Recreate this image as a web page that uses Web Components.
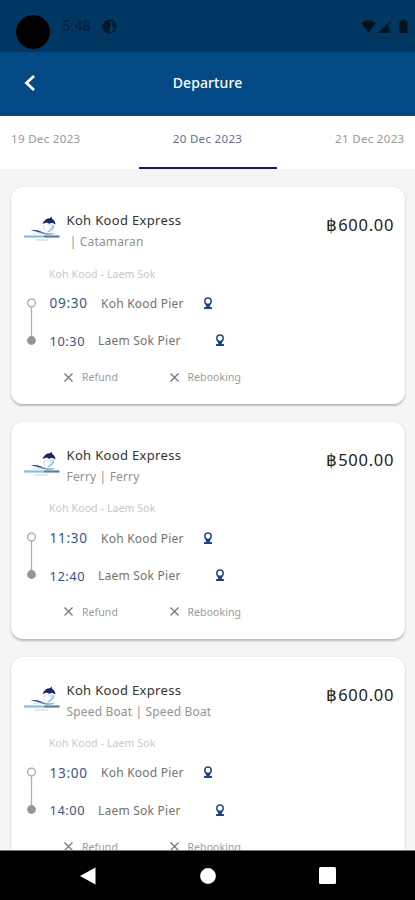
<!DOCTYPE html>
<html lang="en">
<head>
<meta charset="utf-8">
<title>Departure</title>
<style>
html,body{margin:0;height:900px;overflow:hidden;background:#f5f5f6}
body{font-family:"Noto Sans","Open Sans",sans-serif}
</style>
</head>
<body>
<departure-app></departure-app>
<script>
const define = (name, html) => customElements.define(name, class extends HTMLElement {
  constructor() {
    super();
    const t = document.createElement('template');
    t.innerHTML = html;
    this.attachShadow({mode: 'open'}).appendChild(t.content.cloneNode(true));
  }
});

define('status-bar', `<style>
:host{display:flex;height:52px;box-sizing:border-box;background:#003763;color:#04233f;padding:15px 7px 0 16px;align-items:flex-start}
.cam{width:34px;height:34px;border-radius:50%;background:#000;flex:none}
.time{font:500 14.5px/24px Roboto,sans-serif;margin-left:12px;width:40px;letter-spacing:.1px;white-space:nowrap}
svg{display:block;flex:none}
</style>
<span class="cam"></span><span class="time">5:48</span>
<svg width="15" height="15" viewBox="0 0 15 15" style="margin-top:4px"><circle cx="7.500" cy="7.500" r="6.300" fill="none" stroke="#04182a" stroke-width="1.600"/><path d="M2 3L6 1.300h3L7.500 4.500H9.500L8 7.500 7 13.500C3 13 .5 9 2 3zM10.500 3.500h2.500l.8 4-2 1.500-1.800-2z" fill="#04182a"/></svg>
<span style="flex:1"></span>
<svg width="47" height="15" viewBox="0 0 47 15" style="margin-top:4px" fill="#02131f"><path d="M0 4Q7.500-1.600 15 4L7.500 13.500z"/><path d="M17 14L27 4v10z"/><path d="M27 4l3-3v3.500h-1.500v6H30V14h-3z" opacity=".55"/><path d="M39.500 1.800h1.500V.800h3v1h1.500q1 0 1 1V13q0 1-1 1h-6q-1 0-1-1V2.800q0-1 1-1z"/></svg>`);

define('app-bar', `<style>
:host{display:grid;grid-template-columns:60px 1fr 60px;height:64px;background:#034985;color:#fff;align-items:center;box-sizing:border-box;padding-bottom:2px}
svg{display:block;margin-left:22.500px}
.t{text-align:center;font-size:14px;font-weight:500;line-height:20px;letter-spacing:.1px}
</style>
<svg width="14" height="18" viewBox="0 0 14 18"><path d="M11 2L3.500 9l7.500 7" fill="none" stroke="#fff" stroke-width="2.800"/></svg>
<div class="t"><slot></slot></div>`);

define('date-tabs', `<style>
:host{display:grid;grid-template-columns:1fr 138px 1fr;height:53px;background:#fff;color:#999;font-size:11.500px;line-height:16px;box-sizing:border-box;letter-spacing:.33px}
div{padding-top:15px;box-sizing:border-box;white-space:nowrap}
.l{padding-left:11px}.m{text-align:center;color:#626e9e;border-bottom:2px solid #200f82}.r{text-align:right;padding-right:10.500px}
</style><div class="l"><slot name="prev"></slot></div><div class="m"><slot name="current"></slot></div><div class="r"><slot name="next"></slot></div>`);

define('carrier-logo', `<style>:host{display:block;width:36px;height:28px}svg{display:block}</style>
<svg width="36" height="28" viewBox="0 0 36 28">
<path d="M18.500 8C20 4 23 2 26 2.200l1.600-1.700.4 2.200c2.500 1.500 3.600 3.700 3.400 5.800l-3.200-1.700-3.200.9-2.300-1.300z" fill="#182567"/>
<path d="M22 7.500q2.500 1.500 6 0l2.500 1.500q-.5 3-3 5l-3.500 2.500q3-4 1-6.500-1.500-1-3-2.500z" fill="#dceff6"/>
<path d="M29.500 9.500q-.5 4.500-6 6.500" fill="none" stroke="#76b3d2" stroke-width="1.300"/>
<path d="M20.500 9q-2 3 .5 5.500" fill="none" stroke="#b9dcec"/>
<path d="M6.500 14.500q5-1.500 10 .8 6 3 15 1.900-7 2.500-14 .3-5-2.300-11-3z" fill="#234c83"/>
<path d="M9 18q8-2.500 20 .5" fill="none" stroke="#b5ddea" stroke-width=".8"/>
<path d="M0 20.500h20" stroke="#7cc3de" stroke-width="2.200"/><path d="M20 20.500h15.500" stroke="#587aa4" stroke-width="2.200"/>
<path d="M11 24h13" stroke="#c2ced4"/></svg>`);

define('pier-pin', `<style>:host{display:block;width:10px;height:13px}svg{display:block}</style>
<svg width="10" height="13" viewBox="0 0 10 13"><circle cx="5" cy="4.300" r="3.200" fill="none" stroke="#27498f" stroke-width="1.500"/><path d="M2.300 7h5.400L6.600 10h2.300v2H1.100v-2h2.300z" fill="#1d3f88"/></svg>`);

define('rule-item', `<style>
:host{display:flex;align-items:center;font-size:10.500px;line-height:14px;color:#9c9c9c;letter-spacing:.08px}
svg{margin-right:9px;flex:none}
</style><svg width="9" height="9" viewBox="0 0 9 9"><path d="M.500.500l8 8M8.500.500l-8 8" stroke="#777" stroke-width="1.300"/></svg><slot></slot>`);

define('trip-card', `<style>
:host{display:block;box-sizing:border-box;height:217px;background:#fff;border-radius:12px;padding:23px 11px 0 12.500px;box-shadow:0 1.500px 2px #bbb,0 0 2px #e8e8e8}
.head{display:grid;grid-template-columns:43px 1fr auto;height:52.500px}
carrier-logo{margin-top:6px}
.name{font-size:13px;line-height:21px;color:#333;letter-spacing:.33px}
.kind{font-size:12px;line-height:22px;color:#929292;white-space:pre;letter-spacing:.16px}
.price{font-size:16.500px;line-height:30px;color:#222;letter-spacing:.75px;margin-right:-.75px}
.route{font-size:10.500px;line-height:22px;color:#c8c8c8;margin-left:25.500px;letter-spacing:.12px}
.legs{display:grid;grid-template-columns:26px 1fr}
.rail{margin:12px 0 0 2px}
.leg{display:flex;align-items:center;height:37.500px;font-size:12px;color:#727272;white-space:nowrap;letter-spacing:.23px}
.time{font-size:13.500px;color:#34568f;letter-spacing:.72px}
.rules{display:flex;margin:10.500px 0 0 40.500px;height:14px}
rule-item{width:105.500px}
svg{display:block}
</style>
<div class="head"><carrier-logo></carrier-logo><div><div class="name"><slot name="name"></slot></div><div class="kind"><slot name="kind"></slot></div></div><div class="price"><slot name="price"></slot></div></div>
<div class="route">Koh Kood - Laem Sok</div>
<div class="legs"><svg class="rail" width="12" height="50" viewBox="0 0 12 50"><path d="M5.500 10v30" stroke="#b0b0b0" stroke-width="1.300"/><circle cx="5.500" cy="6" r="3.900" fill="#fff" stroke="#a5a5a5" stroke-width="1.200"/><circle cx="5.500" cy="43.500" r="4.400" fill="#959595"/></svg>
<div><div class="leg"><span class="time" style="width:51.500px"><slot name="dep"></slot></span><span style="width:101.500px">Koh Kood Pier</span><pier-pin></pier-pin></div>
<div class="leg"><span class="time" style="width:48.500px;font-size:12.800px;letter-spacing:.6px"><slot name="arr"></slot></span><span style="width:117px">Laem Sok Pier</span><pier-pin></pier-pin></div></div></div>
<div class="rules"><rule-item>Refund</rule-item><rule-item>Rebooking</rule-item></div>`);

define('nav-bar', `<style>
:host{display:grid;grid-template-columns:repeat(3,120px);justify-content:center;justify-items:center;align-items:center;height:50px;background:#000;border-top:1px solid #777;box-sizing:border-box}
svg{display:block}
</style>
<svg width="16" height="18" viewBox="0 0 16 18"><path d="M0 9L15.500.500v17z" fill="#fff"/></svg>
<svg width="16" height="16" viewBox="0 0 16 16"><circle cx="8" cy="8" r="7.900" fill="#fff"/></svg>
<svg width="17" height="17" viewBox="0 0 17 17"><rect width="17" height="17" rx="1.500" fill="#fff"/></svg>`);

define('departure-app', `<style>
:host{display:grid;grid-template-rows:52px 64px 53px 681px 50px;height:900px;width:415px;overflow:hidden}
main{overflow:hidden;padding:18px 10.500px 0 11px;display:flex;flex-direction:column;gap:17.800px;background:#f5f5f6}
trip-card{flex:none}
</style>
<status-bar></status-bar><app-bar>Departure</app-bar>
<date-tabs><span slot="prev">19 Dec 2023</span><span slot="current">20 Dec 2023</span><span slot="next">21 Dec 2023</span></date-tabs>
<main>
<trip-card><span slot="name">Koh Kood Express</span><span slot="kind"> | Catamaran</span><span slot="price">฿600.00</span><span slot="dep">09:30</span><span slot="arr">10:30</span></trip-card>
<trip-card><span slot="name">Koh Kood Express</span><span slot="kind">Ferry | Ferry</span><span slot="price">฿500.00</span><span slot="dep">11:30</span><span slot="arr">12:40</span></trip-card>
<trip-card><span slot="name">Koh Kood Express</span><span slot="kind">Speed Boat | Speed Boat</span><span slot="price">฿600.00</span><span slot="dep">13:00</span><span slot="arr">14:00</span></trip-card>
</main>
<nav-bar></nav-bar>`);
</script>
</body>
</html>
